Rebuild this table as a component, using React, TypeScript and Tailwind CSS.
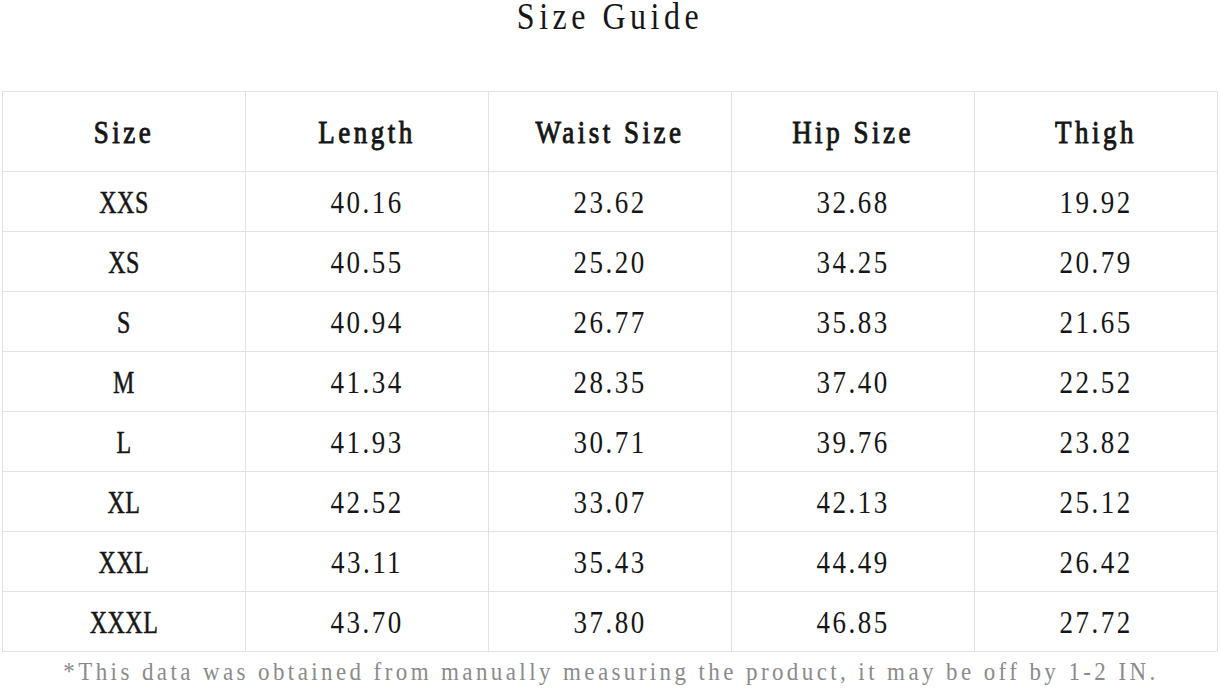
const headers = ["Size", "Length", "Waist Size", "Hip Size", "Thigh"];

const rows = [
  ["XXS", "40.16", "23.62", "32.68", "19.92"],
  ["XS", "40.55", "25.20", "34.25", "20.79"],
  ["S", "40.94", "26.77", "35.83", "21.65"],
  ["M", "41.34", "28.35", "37.40", "22.52"],
  ["L", "41.93", "30.71", "39.76", "23.82"],
  ["XL", "42.52", "33.07", "42.13", "25.12"],
  ["XXL", "43.11", "35.43", "44.49", "26.42"],
  ["XXXL", "43.70", "37.80", "46.85", "27.72"],
];

const App = () => {
  return (
    <div className="w-[1220px] h-[693px] bg-white text-[#161616] font-['Liberation_Serif',serif] overflow-hidden">
      <div className="h-[32px] flex items-center justify-center">
        <span className="inline-block scale-y-[1.18] text-[32px] leading-[26px] tracking-[4.5px]">
          Size Guide
        </span>
      </div>

      <div className="mt-[59px] ml-[2px] w-[1216px] grid grid-cols-5 border-l border-t border-[#e2e2e2]">
        {headers.map((h) => (
          <div
            key={h}
            className="h-[80px] pt-[3px] flex items-center justify-center border-r border-b border-[#e2e2e2]"
          >
            <span className="inline-block whitespace-pre scale-y-[1.17] text-[27px] leading-[27px] tracking-[3.5px] [-webkit-text-stroke:0.8px_#161616]">
              {h}
            </span>
          </div>
        ))}
        {rows.map((r) =>
          r.map((v, i) => (
            <div
              key={r[0] + i}
              className="h-[60px] pt-[3px] flex items-center justify-center border-r border-b border-[#e2e2e2]"
            >
              {i === 0 ? (
                <span className="inline-block scale-y-[1.3] text-[24px] leading-[24px] tracking-[0.5px] [-webkit-text-stroke:0.4px_#161616]">
                  {v}
                </span>
              ) : (
                <span className="inline-block scale-y-[1.17] text-[27px] leading-[27px] tracking-[2.5px]">
                  {v}
                </span>
              )}
            </div>
          ))
        )}
      </div>

      <div className="h-[39px] pl-[2px] flex items-center justify-center">
        <span className="inline-block whitespace-pre scale-y-[1.12] text-[23px] leading-[23px] tracking-[3.4px] text-[#8a8a8a]">
          *This data was obtained from manually measuring the product, it may be off by 1-2 IN.
        </span>
      </div>
    </div>
  );
};

export default App;
